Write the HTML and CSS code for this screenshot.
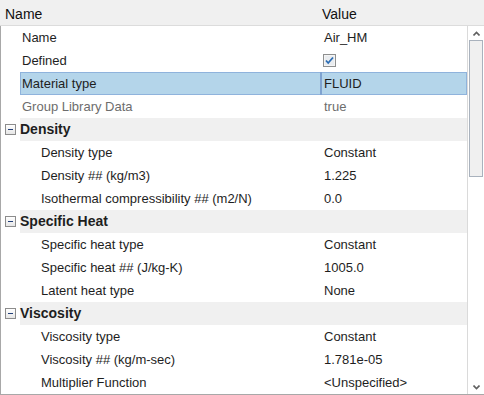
FILE: index.html
```html
<!DOCTYPE html>
<html lang="en">
<head>
    <meta charset="UTF-8">
    <title>Material Properties</title>
    <link rel="stylesheet" href="styles.css">
</head>
<body>
    <div class="grid">
        <div class="header">
            <div class="h-name">Name</div>
            <div class="h-value">Value</div>
        </div>
        <div class="panel">
            <div class="tree">
                <div class="row">
                    <div class="gutter"></div>
                    <div class="cells"><div class="name">Name</div><div class="value">Air_HM</div></div>
                </div>
                <div class="row">
                    <div class="gutter"></div>
                    <div class="cells">
                        <div class="name">Defined</div>
                        <div class="value">
                            <svg class="check" width="13" height="13" viewBox="0 0 13 13">
                                <rect x="0.5" y="0.5" width="12" height="12" fill="#f6f6f6" stroke="#8e8f8f"/>
                                <rect x="1.5" y="1.5" width="10" height="10" fill="#e9ecef" stroke="#f4f4f4"/>
                                <path d="M3 6.5 L5.2 9 L10 3.5" fill="none" stroke="#2b6cb4" stroke-width="1.8"/>
                            </svg>
                        </div>
                    </div>
                </div>
                <div class="row selected">
                    <div class="gutter"></div>
                    <div class="cells"><div class="name">Material type</div><div class="value">FLUID</div></div>
                </div>
                <div class="row muted">
                    <div class="gutter"></div>
                    <div class="cells"><div class="name">Group Library Data</div><div class="value">true</div></div>
                </div>

                <div class="row group">
                    <div class="gutter"><span class="toggle"></span></div>
                    <div class="cells"><div class="name">Density</div><div class="value"></div></div>
                </div>
                <div class="row child">
                    <div class="gutter"></div>
                    <div class="cells"><div class="name">Density type</div><div class="value">Constant</div></div>
                </div>
                <div class="row child">
                    <div class="gutter"></div>
                    <div class="cells"><div class="name">Density ## (kg/m3)</div><div class="value">1.225</div></div>
                </div>
                <div class="row child">
                    <div class="gutter"></div>
                    <div class="cells"><div class="name">Isothermal compressibility ## (m2/N)</div><div class="value">0.0</div></div>
                </div>

                <div class="row group">
                    <div class="gutter"><span class="toggle"></span></div>
                    <div class="cells"><div class="name">Specific Heat</div><div class="value"></div></div>
                </div>
                <div class="row child">
                    <div class="gutter"></div>
                    <div class="cells"><div class="name">Specific heat type</div><div class="value">Constant</div></div>
                </div>
                <div class="row child">
                    <div class="gutter"></div>
                    <div class="cells"><div class="name">Specific heat ## (J/kg-K)</div><div class="value">1005.0</div></div>
                </div>
                <div class="row child">
                    <div class="gutter"></div>
                    <div class="cells"><div class="name">Latent heat type</div><div class="value">None</div></div>
                </div>

                <div class="row group">
                    <div class="gutter"><span class="toggle"></span></div>
                    <div class="cells"><div class="name">Viscosity</div><div class="value"></div></div>
                </div>
                <div class="row child">
                    <div class="gutter"></div>
                    <div class="cells"><div class="name">Viscosity type</div><div class="value">Constant</div></div>
                </div>
                <div class="row child">
                    <div class="gutter"></div>
                    <div class="cells"><div class="name">Viscosity ## (kg/m-sec)</div><div class="value">1.781e-05</div></div>
                </div>
                <div class="row child">
                    <div class="gutter"></div>
                    <div class="cells"><div class="name">Multiplier Function</div><div class="value">&lt;Unspecified&gt;</div></div>
                </div>
            </div>
            <div class="scrollbar">
                <div class="arrow">
                    <svg width="7" height="5" viewBox="0 0 7 5"><path d="M0.5 4.5 L3.5 1.5 L6.5 4.5" fill="none" stroke="#606060" stroke-width="1.6"/></svg>
                </div>
                <div class="thumb"></div>
                <div class="track"></div>
                <div class="arrow">
                    <svg width="7" height="5" viewBox="0 0 7 5"><path d="M0.5 0.5 L3.5 3.5 L6.5 0.5" fill="none" stroke="#606060" stroke-width="1.6"/></svg>
                </div>
            </div>
        </div>
    </div>
</body>
</html>
```

FILE: styles.css
```css
* {
    margin: 0;
    padding: 0;
    box-sizing: border-box;
}
body {
    width: 484px;
    height: 395px;
    overflow: hidden;
    background: #ffffff;
    font-family: "Liberation Sans", Arial, sans-serif;
    color: #1e1e1e;
}
.grid {
    width: 484px;
    height: 395px;
    display: flex;
    flex-direction: column;
}
.header {
    display: flex;
    height: 26px;
    background: #f0f0f0;
    border-bottom: 1px solid #dcdcdc;
    font-size: 14px;
    line-height: 19px;
    padding-top: 5px;
    color: #111;
}
.h-name {
    width: 320px;
    padding-left: 5px;
}
.h-value {
    padding-left: 2px;
}
.panel {
    flex: 1;
    display: flex;
    overflow: hidden;
    border-left: 1px solid #a8a8a8;
    border-bottom: 1px solid #a8a8a8;
}
.tree {
    width: 466px;
    overflow: hidden;
}
.row {
    display: flex;
    height: 23px;
    font-size: 13px;
    line-height: 23px;
}
.gutter {
    width: 19px;
    display: flex;
    align-items: center;
    padding-left: 4px;
}
.cells {
    flex: 1;
    display: flex;
}
.name {
    width: 300px;
    padding-left: 2px;
    white-space: nowrap;
}
.value {
    flex: 1;
    padding-left: 4px;
    display: flex;
    align-items: center;
}
.check {
    display: block;
    margin-left: -1px;
}
.muted {
    color: #6d6d6d;
}
.child .name {
    padding-left: 21px;
}
.group .cells {
    background: #f0f0f0;
}
.group .name {
    padding-left: 0;
    font-weight: bold;
    font-size: 14px;
}
.selected .cells {
    background: #b4d5ea;
    box-shadow: inset 0 0 0 1px #8fb3dc;
}
.selected .value {
    border-left: 2px solid #7fa3d0;
    padding-left: 2px;
}
.toggle {
    display: block;
    width: 11px;
    height: 11px;
    border: 1px solid #8c8c8c;
    background: linear-gradient(#ffffff, #e6e6e6);
    position: relative;
}
.toggle::after {
    content: "";
    position: absolute;
    left: 2px;
    top: 4px;
    width: 5px;
    height: 1px;
    background: #23407a;
}
.scrollbar {
    width: 17px;
    display: flex;
    flex-direction: column;
    border-left: 1px solid #dadada;
    padding: 0 1px;
}
.arrow {
    height: 14px;
    display: flex;
    align-items: center;
    justify-content: center;
    flex-shrink: 0;
}
.thumb {
    height: 137px;
    flex-shrink: 0;
    background: #f0f0f0;
    border: 1px solid #a9b2bd;
}
.track {
    flex: 1;
}
```
